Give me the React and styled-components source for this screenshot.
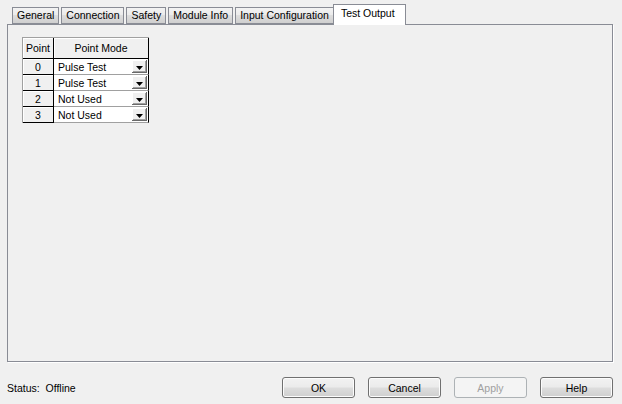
import React from "react"
import styled, { createGlobalStyle } from "styled-components"

const GlobalStyle = createGlobalStyle`
  html, body {
    margin: 0;
    padding: 0;
    background: #f0f0f0;
  }
  body {
    width: 622px;
    height: 404px;
    overflow: hidden;
    font-family: "Liberation Sans", Arial, sans-serif;
    font-size: 10.5px;
    color: #000;
  }
`

const tabs = ["General", "Connection", "Safety", "Module Info", "Input Configuration", "Test Output"]

const points = [
  { id: 0, mode: "Pulse Test" },
  { id: 1, mode: "Pulse Test" },
  { id: 2, mode: "Not Used" },
  { id: 3, mode: "Not Used" },
]

export default function App() {
  const active = "Test Output"
  return (
    <Window>
      <GlobalStyle />
      <TabStrip>
        {tabs.map((t) => (
          <Tab key={t} $active={t === active}>
            {t}
          </Tab>
        ))}
      </TabStrip>
      <Panel>
        <Table>
          <HeaderCell>Point</HeaderCell>
          <HeaderCell>Point Mode</HeaderCell>
          {points.map((p) => (
            <React.Fragment key={p.id}>
              <NumberCell>{p.id}</NumberCell>
              <ComboCell>
                <ComboText>{p.mode}</ComboText>
                <DropButton>
                  <svg width="7" height="4" viewBox="0 0 7 4">
                    <polygon points="0,0 7,0 3.5,4" fill="#000" />
                  </svg>
                </DropButton>
              </ComboCell>
            </React.Fragment>
          ))}
        </Table>
      </Panel>
      <Footer>
        <Status>Status:&nbsp; Offline</Status>
        <Button>OK</Button>
        <Button>Cancel</Button>
        <Button disabled>Apply</Button>
        <Button>Help</Button>
      </Footer>
    </Window>
  )
}

const Window = styled.div`
  width: 622px;
  height: 404px;
  display: flex;
  flex-direction: column;
`

const TabStrip = styled.div`
  height: 24px;
  box-sizing: border-box;
  padding-left: 12px;
  display: flex;
  align-items: flex-end;
  gap: 2px;
  position: relative;
  z-index: 1;
`

const Tab = styled.div`
  box-sizing: border-box;
  height: ${(p) => (p.$active ? "21px" : "17px")};
  padding: ${(p) => (p.$active ? "0 10px 3px 7px" : "0 4px")};
  margin: ${(p) => (p.$active ? "0 0 -1px -3px" : "0")};
  border: 1px solid #898c95;
  border-bottom: ${(p) => (p.$active ? "none" : "1px solid #898c95")};
  background: ${(p) =>
    p.$active
      ? "#ffffff"
      : "linear-gradient(180deg, #f3f3f3 0%, #ebebeb 45%, #dddddd 50%, #cfcfcf 100%)"};
  display: flex;
  align-items: center;
  line-height: 1;
  white-space: nowrap;
`

const Panel = styled.div`
  margin: 0 9px 0 7px;
  height: 338px;
  box-sizing: border-box;
  border: 1px solid #898c95;
  box-shadow: 1px 1px 0 #ffffff;
  background: #f0f0f0;
  padding: 12px 0 0 14px;
`

const Table = styled.div`
  display: grid;
  grid-template-columns: 31px 95px;
  grid-template-rows: 21px repeat(4, 16px);
  width: fit-content;
  border-top: 1px solid #a0a0a0;
  border-left: 1px solid #a0a0a0;
`

const HeaderCell = styled.div`
  box-sizing: border-box;
  border-right: 1px solid #000;
  border-bottom: 1px solid #000;
  box-shadow: inset 1px 1px 0 #ffffff;
  background: #f0f0f0;
  display: flex;
  align-items: center;
  justify-content: center;
`

const NumberCell = styled(HeaderCell)`
  padding-top: 1px;
`

const ComboCell = styled.div`
  box-sizing: border-box;
  border-right: 1px solid #000;
  border-bottom: 1px solid #a0a0a0;
  background: #ffffff;
  display: flex;
  align-items: center;
  padding: 1px 1px 1px 4px;
`

const ComboText = styled.span`
  flex: 1;
  white-space: nowrap;
`

const DropButton = styled.div`
  width: 15px;
  height: 13px;
  box-sizing: border-box;
  background: #f0f0f0;
  border-right: 1px solid #696969;
  border-bottom: 1px solid #696969;
  box-shadow: inset 1px 1px 0 #ffffff, inset -1px -1px 0 #a0a0a0;
  display: flex;
  align-items: flex-end;
  justify-content: center;
  padding-bottom: 2px;
`

const Footer = styled.div`
  display: flex;
  align-items: flex-start;
  gap: 13px;
  padding: 15px 9px 0 7px;
`

const Status = styled.div`
  flex: 1;
  height: 21px;
  display: flex;
  align-items: center;
`

const Button = styled.button`
  width: 73px;
  height: 21px;
  box-sizing: border-box;
  font-family: inherit;
  font-size: 10.5px;
  color: #000;
  border: 1px solid #707070;
  border-radius: 3px;
  background: linear-gradient(180deg, #f2f2f2 0%, #ebebeb 48%, #dddddd 52%, #cfcfcf 100%);
  box-shadow: inset 0 0 0 1px #fcfcfc;
  padding: 0;

  &:disabled {
    color: #a0a0a0;
    border-color: #adb2b5;
    background: #f4f4f4;
    box-shadow: none;
  }
`
